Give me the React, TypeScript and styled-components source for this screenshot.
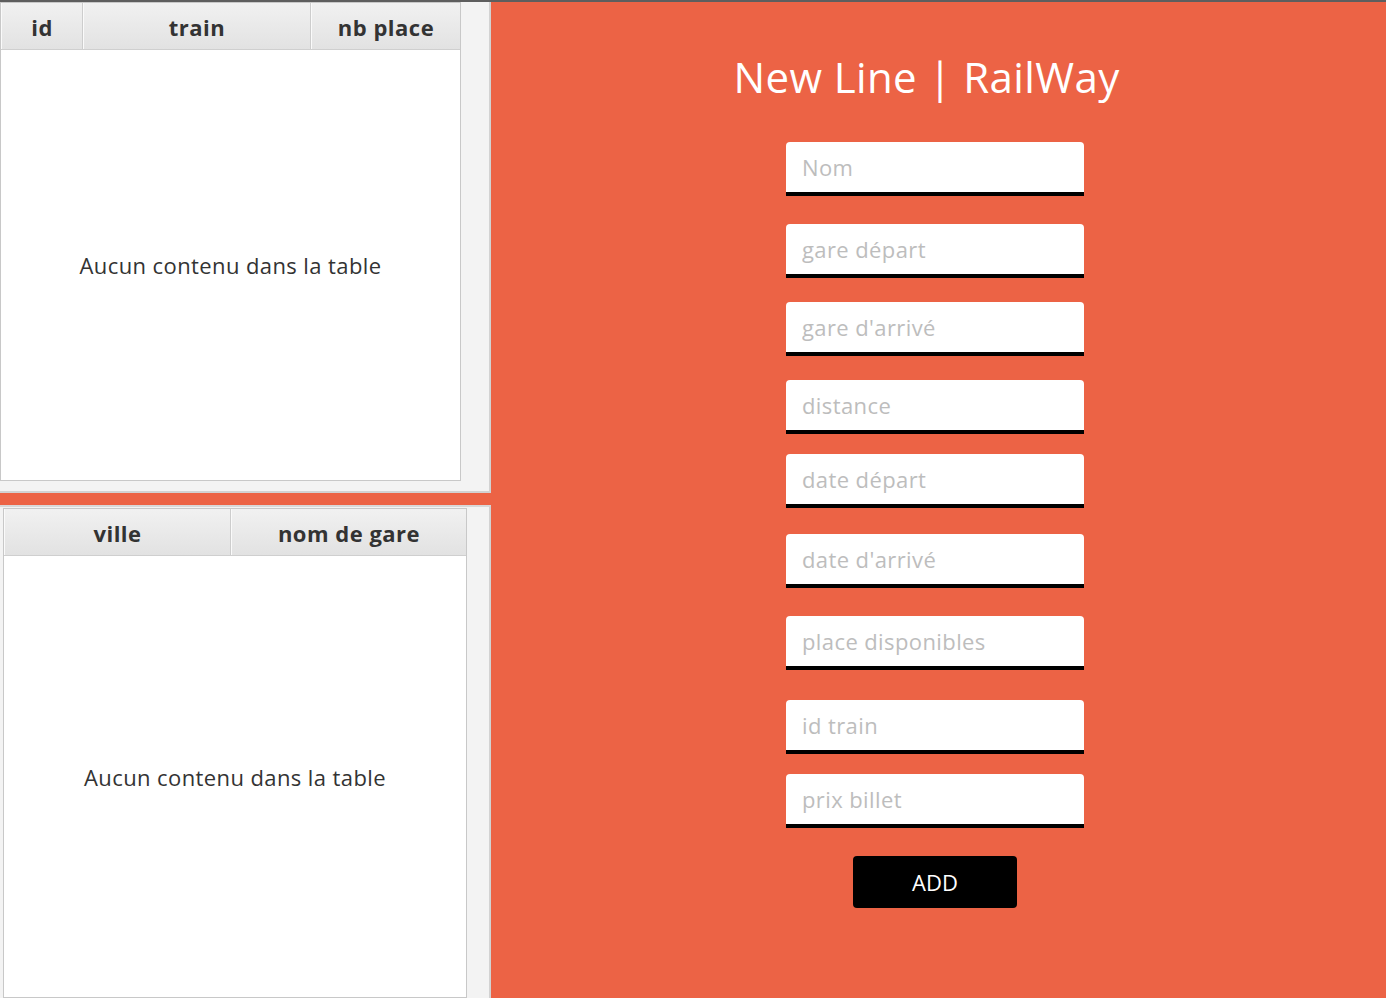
import React from "react";
import styled, { createGlobalStyle } from "styled-components";

const Global = createGlobalStyle`
  html, body { margin: 0; padding: 0; }
  body { font-family: "Open Sans", "Noto Sans", sans-serif; background: #ec6345; }
  * { box-sizing: border-box; }
`;

const Window = styled.div`
  width: 1386px;
  height: 998px;
  display: flex;
  flex-direction: column;
  background: #ec6345;
  overflow: hidden;
`;

const TopEdge = styled.div`
  height: 2px;
  background: #5e5e5e;
  flex: none;
`;

const Main = styled.div`
  flex: 1;
  display: flex;
  min-height: 0;
`;

const LeftColumn = styled.div`
  width: 491px;
  display: flex;
  flex-direction: column;
  gap: 12px;
  flex: none;
`;

const Pane = styled.div<{ $h?: number; $pad: string }>`
  background: #f3f3f3;
  border-right: 2px solid #d2d2d2;
  border-bottom: ${(p) => (p.$h ? "2px solid #d2d2d2" : "none")};
  border-top: ${(p) => (p.$h ? "none" : "2px solid #d8d8d8")};
  height: ${(p) => (p.$h ? `${p.$h}px` : "auto")};
  flex: ${(p) => (p.$h ? "none" : "1")};
  padding: ${(p) => p.$pad};
  display: flex;
  min-height: 0;
`;

const Table = styled.div<{ $w: number }>`
  width: ${(p) => p.$w}px;
  background: #fff;
  border: 1px solid #c8c8c8;
  display: flex;
  flex-direction: column;
`;

const Header = styled.div<{ $cols: string }>`
  height: 47px;
  display: grid;
  grid-template-columns: ${(p) => p.$cols};
  background: linear-gradient(#f1f1f1, #e2e2e2);
  border-bottom: 1px solid #cfcfcf;
  flex: none;
`;

const HeadCell = styled.div`
  display: flex;
  align-items: center;
  justify-content: center;
  font-weight: 700;
  font-size: 22px;
  letter-spacing: 0.5px;
  color: #333;
  border-right: 1px solid #cdcdcd;
  border-left: 1px solid #fafafa;
  padding-top: 2px;
  &:last-child { border-right: none; }
`;

const Empty = styled.div`
  flex: 1;
  display: flex;
  align-items: center;
  justify-content: center;
  font-size: 22px;
  letter-spacing: 0.4px;
  color: #333;
`;

const FormPanel = styled.div`
  flex: 1;
  display: flex;
  flex-direction: column;
  align-items: center;
  padding-top: 47px;
`;

const Title = styled.h1`
  margin: 0 24px 0 0;
  font-family: "Open Sans", sans-serif;
  font-weight: 400;
  font-size: 42px;
  line-height: 56px;
  color: #fff;
  letter-spacing: 0.4px;
`;

const Fields = styled.div`
  margin-top: 37px;
  padding-right: 7px;
  display: flex;
  flex-direction: column;
  align-items: center;
`;

const Field = styled.input<{ $gap: number }>`
  width: 298px;
  height: 54px;
  margin-top: ${(p) => p.$gap}px;
  border: none;
  border-bottom: 4px solid #000;
  border-radius: 4px 4px 0 0;
  background: #fff;
  padding: 0 16px;
  font-family: "Open Sans", sans-serif;
  font-size: 22px;
  letter-spacing: 0.4px;
  color: #333;
  outline: none;
  &::placeholder { color: #bdbdbd; }
`;

const AddButton = styled.button`
  margin-top: 28px;
  width: 164px;
  height: 52px;
  background: #000;
  color: #fff;
  border: none;
  border-radius: 4px;
  font-family: "Open Sans", sans-serif;
  font-size: 22px;
  cursor: pointer;
`;

const fields: { ph: string; gap: number }[] = [
  { ph: "Nom", gap: 0 },
  { ph: "gare départ", gap: 28 },
  { ph: "gare d'arrivé", gap: 24 },
  { ph: "distance", gap: 24 },
  { ph: "date départ", gap: 20 },
  { ph: "date d'arrivé", gap: 26 },
  { ph: "place disponibles", gap: 28 },
  { ph: "id train", gap: 30 },
  { ph: "prix billet", gap: 20 },
];

export default function App() {
  return (
    <Window>
      <Global />
      <TopEdge />
      <Main>
        <LeftColumn>
          <Pane $h={491} $pad="0 28px 10px 0">
            <Table $w={462}>
              <Header $cols="82px 228px 1fr">
                <HeadCell>id</HeadCell>
                <HeadCell>train</HeadCell>
                <HeadCell>nb place</HeadCell>
              </Header>
              <Empty>Aucun contenu dans la table</Empty>
            </Table>
          </Pane>
          <Pane $pad="1px 22px 0 3px">
            <Table $w={465}>
              <Header $cols="227px 1fr">
                <HeadCell>ville</HeadCell>
                <HeadCell>nom de gare</HeadCell>
              </Header>
              <Empty>Aucun contenu dans la table</Empty>
            </Table>
          </Pane>
        </LeftColumn>
        <FormPanel>
          <Title>New Line | RailWay</Title>
          <Fields>
            {fields.map((f) => (
              <Field key={f.ph} placeholder={f.ph} $gap={f.gap} />
            ))}
            <AddButton>ADD</AddButton>
          </Fields>
        </FormPanel>
      </Main>
    </Window>
  );
}
